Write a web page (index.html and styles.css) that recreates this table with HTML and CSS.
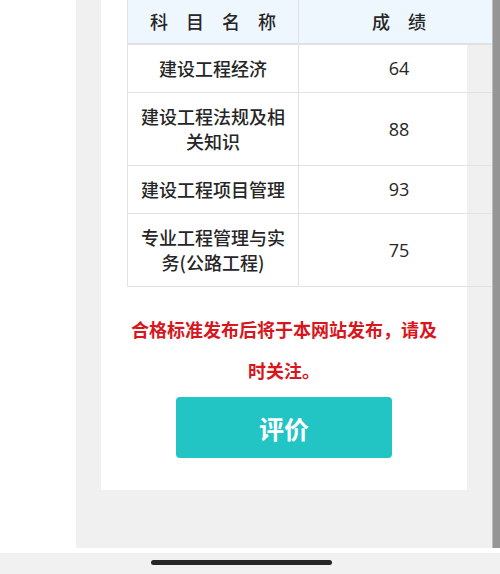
FILE: index.html
```html
<!DOCTYPE html>
<html lang="zh-CN">
<head>
<meta charset="utf-8">
<link rel="stylesheet" href="styles.css">
</head>
<body>
<div class="screen">
  <div class="main">
    <div class="side"></div>
    <div class="panel">
      <div class="card">
        <table class="scores">
          <thead>
            <tr><th class="c1">科　目　名　称</th><th class="c2">成　绩</th></tr>
          </thead>
          <tbody>
            <tr><td>建设工程经济</td><td class="num">64</td></tr>
            <tr><td>建设工程法规及相关知识</td><td class="num">88</td></tr>
            <tr><td>建设工程项目管理</td><td class="num">93</td></tr>
            <tr><td>专业工程管理与实务(公路工程)</td><td class="num">75</td></tr>
          </tbody>
        </table>
        <p class="notice">合格标准发布后将于本网站发布，请及时关注。</p>
        <div class="btn-row"><button class="rate">评价</button></div>
      </div>
      <div class="scrollbar"></div>
    </div>
  </div>
  <div class="gap"></div>
  <div class="homebar"><span class="pill"></span></div>
</div>
</body>
</html>
```
FILE: styles.css
```css
html, body {
  margin: 0;
  padding: 0;
  background: #ffffff;
  font-family: "Noto Sans CJK SC", "Noto Sans", sans-serif;
}
.screen {
  width: 500px;
  height: 574px;
  display: flex;
  flex-direction: column;
  overflow: hidden;
}
.main {
  height: 548px;
  display: flex;
  flex-shrink: 0;
}
.side {
  width: 76px;
  background: #ffffff;
  flex-shrink: 0;
}
.panel {
  flex: 1;
  background: #f0f0f0;
  padding-left: 25px;
  position: relative;
  overflow: hidden;
}
.card {
  width: 314px;
  background: #ffffff;
  padding: 0 26px 32px;
}
.scores {
  width: 372px;
  border-collapse: collapse;
  table-layout: fixed;
  color: #262626;
  font-size: 18px;
  line-height: 25px;
  font-weight: 500;
}
.scores th {
  background: #eef6fe;
  font-weight: 500;
  height: 43px;
  padding: 0;
  border-left: 1px solid #e2e2e2;
  border-bottom: 2px solid #e2e2e2;
  text-align: center;
  font-size: 18px;
}
.scores .c1 { width: 170px; }
.scores td {
  text-align: center;
  padding: 11px 8px;
  border-left: 1px solid #e2e2e2;
  border-bottom: 1px solid #e2e2e2;
}
.scores td.num {
  font-family: "Open Sans", "Noto Sans", sans-serif;
  font-weight: 500;
  padding-left: 0;
  padding-right: 0;
}
.notice {
  margin: 22px 0 0;
  color: #d7161d;
  font-weight: bold;
  font-size: 18px;
  line-height: 41px;
  text-align: center;
}
.btn-row {
  display: flex;
  justify-content: center;
  margin-top: 6px;
}
.rate {
  width: 216px;
  height: 61px;
  border: none;
  border-radius: 4px;
  background: #22c4c4;
  color: #ffffff;
  font-family: "Noto Sans CJK SC", sans-serif;
  font-size: 25px;
  font-weight: bold;
  padding: 0;
}
.scrollbar {
  position: absolute;
  top: 0;
  right: 0;
  width: 7px;
  height: 548px;
  background: #959595;
  border-left: 1px solid #bdbdbd;
}
.gap {
  height: 5px;
  background: #ffffff;
}
.homebar {
  flex: 1;
  background: #f1f1f1;
  display: flex;
  justify-content: center;
  align-items: flex-start;
}
.pill {
  margin-top: 7px;
  margin-left: -17px;
  width: 181px;
  height: 5px;
  border-radius: 3px;
  background: #262626;
}
```
